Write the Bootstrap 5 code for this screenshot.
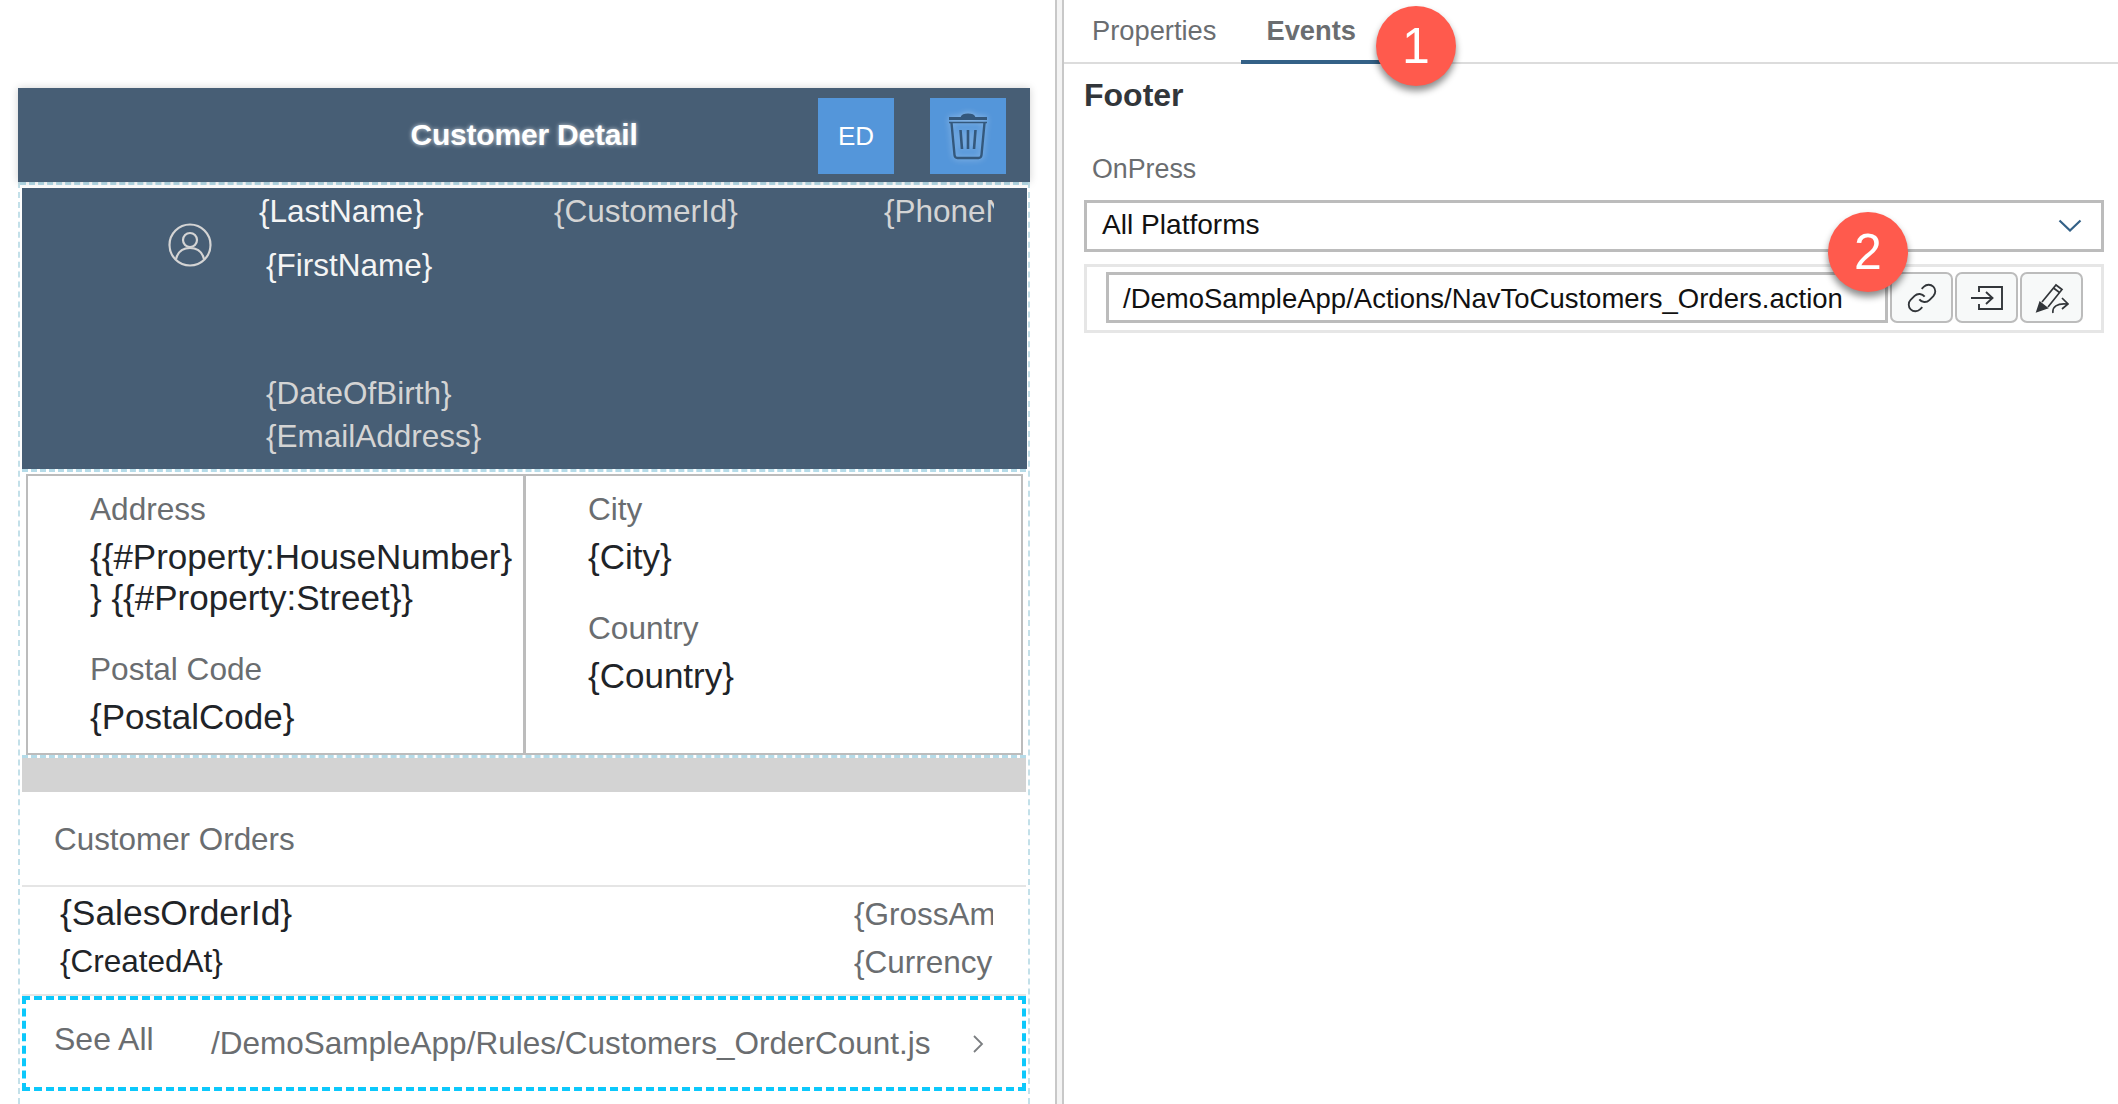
<!DOCTYPE html>
<html lang="en">
<head>
<meta charset="UTF-8">
<title>Customer Detail - Footer Events</title>
<link rel="stylesheet" href="https://cdn.jsdelivr.net/npm/bootstrap@5.3.3/dist/css/bootstrap.min.css">
<style>
html, body { height: 1104px; overflow: hidden; }
body { font-family: "Liberation Sans", Arial, sans-serif; background: #fff; color: #32363a; }
.page-wrap { height: 1104px; }

/* left preview */
.left-pane { width: 1055px; flex: none; padding: 88px 0 0 18px; }
.cust-card { width: 1012px; height: 1016px; }
.cust-head { height: 94px; background: #475e75; box-shadow: 0 0 8px rgba(0,0,0,.18); padding-right: 24px; }
.cust-title { left: 0; width: 1012px; text-align: center; line-height: 94px; top: 0; color: #fff; font-size: 30px; font-weight: 700; letter-spacing: -.2px; text-shadow: 0 0 4px rgba(255,255,255,.7); }
.head-btn { width: 76px; height: 76px; margin-top: 2px; background: #5496da; color: #fff; font-size: 26px; }
.trash-btn { margin-left: 36px; }
.trash-ico { filter: drop-shadow(0 0 3px rgba(255,255,255,.45)); }
.cust-body { height: 922px; border-left: 2px dashed #c3e0e9; border-right: 2px dashed #c3e0e9; padding: 0 2px; }
.dash-strip { height: 6px; border-top: 3px dashed #b5dbe8; margin: 0 -2px; }
.dash-strip.thin { height: 5px; margin: 0; }
.dash-strip.low { height: 3px; }
.hero-sec { height: 281px; padding-top: 1px; background: #475e75; color: #d4d4d4; font-size: 31.5px; margin-right: -1px; }
.hero-sec .name-txt { color: #f4f4f4; }
.hero-line { line-height: 44px; white-space: nowrap; }
.avatar-col { width: 237px; flex: none; padding: 30px 0 0 146px; }
.name-col { width: 295px; flex: none; }
.id-col { width: 330px; flex: none; }
.phone-col { width: 110px; flex: none; overflow: hidden; }
.first-line { margin: 10px 0 0 7px; }
.dob-line { margin: 84px 0 0 7px; }
.mail-line { margin: -1px 0 0 7px; }

.addr-box { height: 281px; margin: 0 3px 0 4px; border: 2px solid #bcbcbc; }
.addr-col { padding: 12px 0 0 62px; color: #1f2428; white-space: nowrap; }
.addr-left { width: 495px; flex: none; }
.addr-right { flex: 1; border-left: 3px solid #bcbcbc; }
.lbl-txt { color: #6a6d70; font-size: 31.6px; line-height: 42px; }
.val-txt { font-size: 35px; line-height: 41px; margin-top: 6px; }
.gap-lbl { margin-top: 30px; }
.band-gray { height: 34px; background: #d3d3d3; }
.orders-title { height: 95px; line-height: 96px; padding-left: 32px; font-size: 31.4px; color: #6a6d70; border-bottom: 2px solid #e5e5e5; }
.order-rows { height: 109px; padding: 3px 33px 0 38px; border-bottom: 2px solid #e5e5e5; }
.order-id { font-size: 35.4px; line-height: 46px; color: #1f2428; }
.order-at { font-size: 31.5px; line-height: 50px; color: #1f2428; }
.order-amt { width: 139px; overflow: hidden; white-space: nowrap; color: #6a6d70; font-size: 31.5px; line-height: 48px; }
.see-all { height: 95px; border: 4px dashed #0cc8fb; padding: 0 38px 0 28px; color: #6a6d70; font-size: 31.5px; }
.see-lbl { width: 157px; flex: none; margin-top: -10px; font-size: 32px; }
.see-path { flex: 1; white-space: nowrap; }

/* right property panel */
.splitter { width: 9px; flex: none; border-left: 2px solid #c8c8c8; border-right: 2px solid #c8c8c8; background: #f4f4f4; }
.right-pane { flex: 1; }
.tab-bar { height: 64px; border-bottom: 2px solid #dcdcdc; padding-left: 3px; }
.tab-bar .nav-link { height: 64px; padding: 11px 25px 0; font-size: 27.3px; line-height: 40px; color: #6a6d70; }
.tab-bar .nav-link.active { font-weight: 700; border-bottom: 4px solid #346187; padding-right: 27px; }
.panel-body { padding: 0 14px 0 20px; }
.footer-head { font-size: 32px; font-weight: 700; line-height: 40px; margin: 11px 0 0; color: #32363a; }
.on-press { font-size: 26.8px; line-height: 40px; color: #6a6d70; margin: 34px 0 0 8px; }
.plat-select { height: 52px; margin-top: 11px; border: 3px solid #bcbcbc; padding: 0 19px 1px 15px; font-size: 28.1px; color: #111; }
.action-box { height: 69px; margin-top: 12px; border: 3px solid #e6e6e6; padding: 5px 18px 0 19px; }
.action-val { width: 782px; flex: none; height: 51px; border: 3px solid #bcbcbc; padding: 2px 0 0 14px; font-size: 27.5px; line-height: 44px; color: #111; white-space: nowrap; overflow: hidden; }
.tool-btn { width: 63px; flex: none; height: 51px; margin-left: 2px; background: #f7f9f9; border: 2px solid #bcbcbc; border-radius: 7px; padding: 0; }
.num-pin { width: 80px; height: 80px; border-radius: 50%; background: #ff5a4d; color: #fff; font-size: 50px; line-height: 80px; text-align: center; box-shadow: 0 5px 7px rgba(0,0,0,.45); }
.pin-one { left: 1376px; top: 6px; }
.pin-two { left: 1828px; top: 212px; }
</style>
</head>
<body>
<div class="page-wrap d-flex position-relative">

  <div class="left-pane">
    <div class="cust-card">
      <div class="cust-head d-flex align-items-center justify-content-end position-relative">
        <div class="cust-title position-absolute">Customer Detail</div>
        <div class="head-btn d-flex align-items-center justify-content-center position-relative">ED</div>
        <div class="head-btn trash-btn d-flex align-items-center justify-content-center position-relative">
          <svg class="trash-ico" width="40" height="48" viewBox="0 0 40 48" fill="none" stroke="#34587c" stroke-width="2.4">
            <path d="M14 5c1-3 11-3 12 0z" fill="#34587c"/>
            <path d="M1 6.5h38" stroke-width="3"/>
            <path d="M1 10.5h38" stroke-width="1.6"/>
            <path d="M3.5 11l3 32c.2 2 1.2 3 3 3h21c1.8 0 2.8-1 3-3l3-32"/>
            <path d="M12.5 18l1.500 19M20 18v19M27.500 18l-1.500 19" stroke-width="2.600"/>
          </svg>
        </div>
      </div>

      <div class="cust-body">
        <div class="dash-strip"></div>
        <div class="hero-sec d-flex">
          <div class="avatar-col">
            <svg width="44" height="44" viewBox="0 0 44 44" fill="none" stroke="#d4d4d4" stroke-width="2.200">
              <circle cx="22" cy="22" r="20.500"/>
              <circle cx="22" cy="17" r="7"/>
              <path d="M8 36c2-8 8-11 14-11s12 3 14 11"/>
            </svg>
          </div>
          <div class="name-col">
            <div class="hero-line name-txt">{LastName}</div>
            <div class="hero-line name-txt first-line">{FirstName}</div>
            <div class="hero-line dob-line">{DateOfBirth}</div>
            <div class="hero-line mail-line">{EmailAddress}</div>
          </div>
          <div class="id-col hero-line">{CustomerId}</div>
          <div class="phone-col hero-line">{PhoneNumber}</div>
        </div>
        <div class="dash-strip thin"></div>
        <div class="addr-box d-flex">
          <div class="addr-col addr-left">
            <div class="lbl-txt">Address</div>
            <div class="val-txt">{{#Property:HouseNumber}<br>} {{#Property:Street}}</div>
            <div class="lbl-txt gap-lbl">Postal Code</div>
            <div class="val-txt">{PostalCode}</div>
          </div>
          <div class="addr-col addr-right">
            <div class="lbl-txt">City</div>
            <div class="val-txt">{City}</div>
            <div class="lbl-txt gap-lbl">Country</div>
            <div class="val-txt">{Country}</div>
          </div>
        </div>
        <div class="dash-strip thin low"></div>
        <div class="band-gray"></div>
        <div class="orders-title">Customer Orders</div>
        <div class="order-rows d-flex justify-content-between">
          <div>
            <div class="order-id">{SalesOrderId}</div>
            <div class="order-at">{CreatedAt}</div>
          </div>
          <div>
            <div class="order-amt">{GrossAmount}</div>
            <div class="order-amt">{CurrencyCode}</div>
          </div>
        </div>
        <div class="see-all d-flex align-items-center">
          <div class="see-lbl">See All</div>
          <div class="see-path">/DemoSampleApp/Rules/Customers_OrderCount.js</div>
          <svg width="12" height="20" viewBox="0 0 12 20" fill="none" stroke="#7b7e81" stroke-width="1.800"><path d="M2 2l8 8-8 8"/></svg>
        </div>
      </div>
    </div>
  </div>

  <div class="splitter"></div>

  <div class="right-pane">
    <ul class="nav tab-bar">
      <li class="nav-item"><a class="nav-link" href="#">Properties</a></li>
      <li class="nav-item"><a class="nav-link active" href="#">Events</a></li>
    </ul>
    <div class="panel-body">
      <h2 class="footer-head">Footer</h2>
      <div class="on-press">OnPress</div>
      <div class="plat-select d-flex align-items-center justify-content-between">
        <span>All Platforms</span>
        <svg width="24" height="13" viewBox="0 0 24 13" fill="none" stroke="#346187" stroke-width="2.200"><path d="M1.500 1.500L12 11.500 22.500 1.500"/></svg>
      </div>
      <div class="action-box d-flex">
        <div class="action-val">/DemoSampleApp/Actions/NavToCustomers_Orders.action</div>
        <button class="tool-btn btn d-flex align-items-center justify-content-center" type="button" aria-label="Link">
          <svg width="32" height="32" viewBox="0 0 24 24" fill="none" stroke="#32363a" stroke-width="1.400">
            <path d="M10 13a5 5 0 0 0 7.540.540l3-3a5 5 0 0 0-7.070-7.070l-1.720 1.710"/>
            <path d="M14 11a5 5 0 0 0-7.540-.540l-3 3a5 5 0 0 0 7.070 7.070l1.710-1.710"/>
          </svg>
        </button>
        <button class="tool-btn btn d-flex align-items-center justify-content-center" type="button" aria-label="Open">
          <svg width="34" height="26" viewBox="0 0 34 26" fill="none" stroke="#32363a" stroke-width="1.900">
            <path d="M9 7V2h23v22H9v-5"/>
            <path d="M1 13h21M16 7l6.500 6-6.500 6"/>
          </svg>
        </button>
        <button class="tool-btn btn d-flex align-items-center justify-content-center" type="button" aria-label="Edit">
          <svg width="34" height="32" viewBox="0 0 34 32" fill="none" stroke="#32363a" stroke-width="1.700">
            <path d="M7 20L21 3l6 4.500L13 25"/>
            <path d="M18.500 6l6 4.500"/>
            <path d="M2 29.500l3-9 7 5.500z" fill="#32363a"/>
            <path d="M18 31c-1-6 4-10 14-9M27 16l6 6-6 5"/>
          </svg>
        </button>
      </div>
    </div>
  </div>

  <div class="num-pin pin-one position-absolute">1</div>
  <div class="num-pin pin-two position-absolute">2</div>
</div>
<script src="https://cdn.jsdelivr.net/npm/bootstrap@5.3.3/dist/js/bootstrap.bundle.min.js"></script>
</body>
</html>
